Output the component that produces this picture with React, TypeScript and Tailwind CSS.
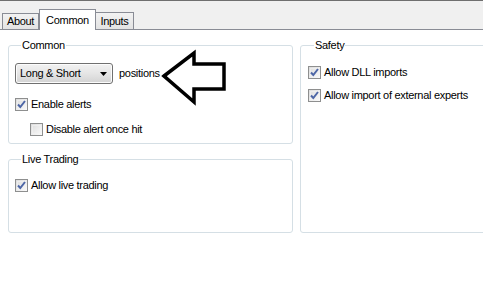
import type { ReactNode } from "react";

function CheckBox({ checked }: { checked: boolean }) {
	return (
		<span className="relative flex h-[13px] w-[13px] shrink-0 items-center justify-center border border-[#8e8f8f] bg-gradient-to-br from-[#dcdcdc] to-[#fbfbfb]">
			<span className="absolute inset-[1px] border border-[#f4f4f4]/60" />
			{checked ? (
				<svg width="11" height="11" viewBox="0 0 11 11" className="relative">
					<path
						d="M2 5.5 L4.3 8 L9 2"
						fill="none"
						stroke="#4d66a6"
						strokeWidth="2"
					/>
				</svg>
			) : null}
		</span>
	);
}

function CheckRow({
	checked,
	label,
	className,
}: {
	checked: boolean;
	label: string;
	className?: string;
}) {
	return (
		<div className={`flex h-[13px] items-center gap-[3px] ${className ?? ""}`}>
			<CheckBox checked={checked} />
			<span className="leading-[13px]">{label}</span>
		</div>
	);
}

function Group({
	title,
	className,
	children,
}: {
	title: string;
	className?: string;
	children: ReactNode;
}) {
	return (
		<fieldset
			className={`rounded-[3px] border border-[#d5dfe5] ${className ?? ""}`}
		>
			<legend className="ml-[6px] px-[1px] leading-[13px]">{title}</legend>
			{children}
		</fieldset>
	);
}

export default function App() {
	return (
		<div className="relative h-[292px] w-[483px] overflow-hidden bg-white font-['Liberation_Sans',Arial,sans-serif] text-[11px] tracking-[-0.3px] text-black">
			<div className="flex h-[30px] items-end border-t border-b border-t-[#6f6f6f] border-b-[#898c95] bg-[#f0f0f0] pl-[2px]">
				<div className="flex h-[16px] w-[37px] items-center justify-center border border-b-0 border-[#898c95] bg-gradient-to-b from-[#f2f2f2] to-[#e3e3e3]">
					About
				</div>
				<div className="relative z-10 -mb-[1px] flex h-[21px] w-[57px] items-start justify-center border border-b-0 border-[#898c95] bg-white pt-[2px]">
					Common
				</div>
				<div className="flex h-[17px] w-[38px] items-center justify-center border border-b-0 border-l-0 border-[#898c95] bg-gradient-to-b from-[#f2f2f2] to-[#e3e3e3]">
					Inputs
				</div>
			</div>

			<div className="flex gap-[7px] pl-[8px] pt-[9px]">
				<div className="flex w-[285px] shrink-0 flex-col gap-[9px]">
					<Group title="Common" className="h-[105px] pl-[6px] pt-[11px]">
						<div className="flex items-center gap-[6px]">
							<div className="flex h-[21px] w-[98px] items-center justify-between rounded-[3px] border border-[#707070] bg-gradient-to-b from-[#f2f2f2] via-[#e5e5e5] to-[#d3d3d3] pl-[4px] pr-[5px] shadow-[inset_0_0_0_1px_#fcfcfc]">
								<span>Long &amp; Short</span>
								<svg width="7" height="4" viewBox="0 0 7 4">
									<path d="M0 0 H7 L3.5 4 Z" fill="#000" />
								</svg>
							</div>
							<span>positions</span>
						</div>
						<CheckRow checked label="Enable alerts" className="mt-[14px]" />
						<CheckRow
							checked={false}
							label="Disable alert once hit"
							className="ml-[15px] mt-[12px]"
						/>
					</Group>
					<Group title="Live Trading" className="h-[80px] pl-[6px] pt-[13px]">
						<CheckRow checked label="Allow live trading" />
					</Group>
				</div>
				<Group title="Safety" className="h-[194px] w-[200px] shrink-0 pl-[7px] pt-[14px]">
					<CheckRow checked label="Allow DLL imports" />
					<CheckRow
						checked
						label="Allow import of external experts"
						className="mt-[10px]"
					/>
				</Group>
			</div>

			<svg
				className="absolute left-0 top-0"
				width="483"
				height="292"
				viewBox="0 0 483 292"
			>
				<polygon
					points="164,76 194,53 194,64 224,64 224,89 194,89 194,102"
					fill="none"
					stroke="#000"
					strokeWidth="3.5"
					strokeLinejoin="miter"
				/>
			</svg>
		</div>
	);
}
